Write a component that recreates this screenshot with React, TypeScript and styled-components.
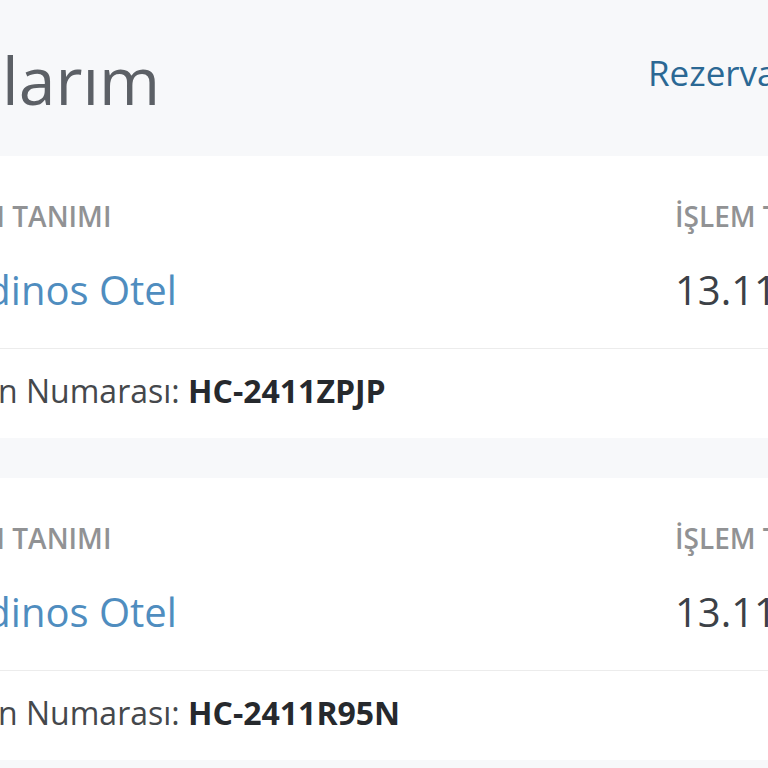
import React from "react";
import styled, { createGlobalStyle } from "styled-components";

const Global = createGlobalStyle`
  html, body {
    margin: 0;
    padding: 0;
    background: #f7f8fa;
    overflow: hidden;
  }
  body {
    font-family: "Open Sans", "Noto Sans", sans-serif;
  }
`;

const Shell = styled.div`
  margin-left: -385px;
  width: 1600px;
`;

const Header = styled.header`
  display: grid;
  grid-template-columns: 1033px auto;
  align-items: start;
  padding-top: 34px;
  margin-bottom: 32px;
`;

const Title = styled.h1`
  margin: 0;
  font-size: 66px;
  line-height: 90px;
  font-weight: 400;
  color: #5c6066;
`;

const HeaderLink = styled.a`
  margin-top: 15px;
  font-size: 35px;
  line-height: 48px;
  color: #2b6894;
  text-decoration: none;
`;

const List = styled.div`
  display: flex;
  flex-direction: column;
  gap: 40px;
`;

const Card = styled.section`
  background: #ffffff;
`;

const CardTop = styled.div`
  display: grid;
  grid-template-columns: 865px 1fr;
  padding: 41px 0 31px 195px;
  border-bottom: 1px solid #ececec;
`;

const Field = styled.div`
  display: flex;
  flex-direction: column;
  gap: 28px;
`;

const Label = styled.div`
  font-size: 28px;
  line-height: 38px;
  font-weight: 600;
  color: #919294;
  white-space: nowrap;
`;

const Value = styled.div<{ $link?: boolean }>`
  font-size: 40px;
  line-height: 54px;
  color: ${(p) => (p.$link ? "#4f8dbf" : "#3c4147")};
  white-space: nowrap;
`;

const CardFooter = styled.div`
  padding: 20px 0 25px 215px;
  font-size: 32px;
  line-height: 44px;
  color: #45484c;
  white-space: nowrap;
`;

const Code = styled.strong`
  font-weight: 700;
  color: #26292d;
`;

type Booking = { name: string; date: string; code: string };

const bookings: Booking[] = [
  { name: "Grand Jardinos Otel", date: "13.11.2024 14:32", code: "HC-2411ZPJP" },
  { name: "Grand Jardinos Otel", date: "13.11.2024 14:05", code: "HC-2411R95N" },
];

export default function App() {
  return (
    <>
      <Global />
      <Shell>
        <Header>
          <Title>Rezervasyonlarım</Title>
          <HeaderLink href="#">Rezervasyon Ara</HeaderLink>
        </Header>
        <List>
          {bookings.map((b) => (
            <Card key={b.code}>
              <CardTop>
                <Field>
                  <Label>REZERVASYON TANIMI</Label>
                  <Value $link>{b.name}</Value>
                </Field>
                <Field>
                  <Label>İŞLEM TARİHİ</Label>
                  <Value>{b.date}</Value>
                </Field>
              </CardTop>
              <CardFooter>
                Rezervasyon Numarası: <Code>{b.code}</Code>
              </CardFooter>
            </Card>
          ))}
        </List>
      </Shell>
    </>
  );
}
